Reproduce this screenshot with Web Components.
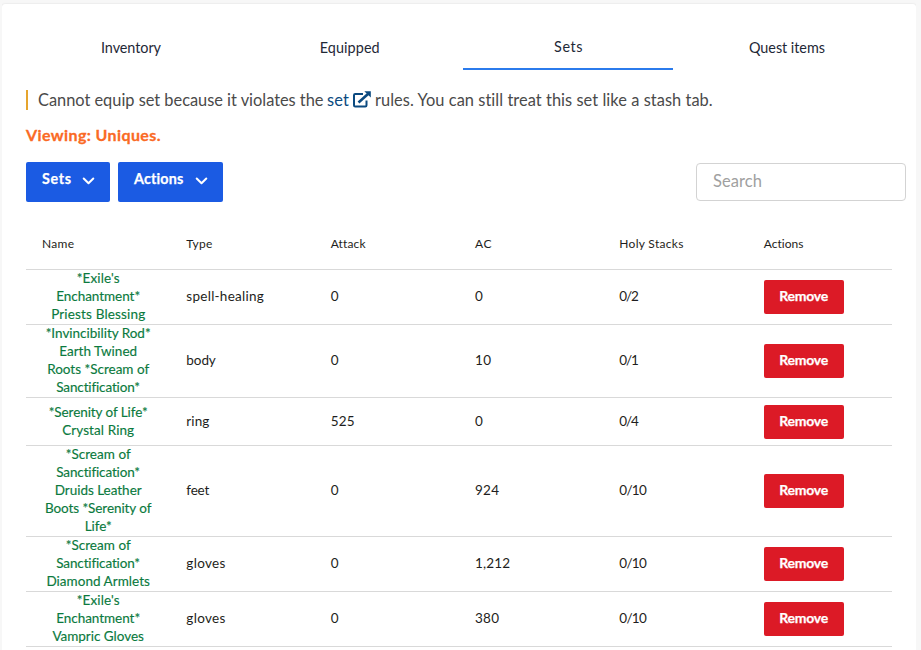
<!DOCTYPE html>
<html lang="en">
<head>
<meta charset="utf-8">
<title>Sets</title>
<style>
html, body { margin: 0; height: 100%; overflow: hidden; background: #f7f7f7; }
body { font-family: Lato, "Open Sans", sans-serif; color: #1e1e20; }
</style>
</head>
<body>
<inventory-page></inventory-page>
<script>
// Text run whose tracking is set so that it fills a given width.
class FitText extends HTMLElement {
  connectedCallback() {
    const root = this.attachShadow({ mode: 'open' });
    root.innerHTML = `<style>:host{display:inline-block;white-space:pre;vertical-align:baseline;transform:translateY(var(--lift,-1px))}span{display:inline-block}</style><span><slot></slot></span>`;
    const span = root.querySelector('span');
    const n = this.textContent.length;
    const want = parseFloat(this.getAttribute('w'));
    if (!want || n < 2) return;
    const ls = (want - span.getBoundingClientRect().width) / (n - 1);
    span.style.letterSpacing = ls + 'px';
    span.style.marginRight = -ls + 'px';
  }
}

class TabItem extends HTMLElement {
  connectedCallback() {
    this.attachShadow({ mode: 'open' }).innerHTML = `<style>
      :host{--lift:0px;display:flex;align-items:center;justify-content:center;width:210px;height:44px;box-sizing:border-box;font-size:14.4px;line-height:18px;color:#1f2937}
      :host([active]){border-bottom:2px solid #2b7bec}
    </style><slot></slot>`;
  }
}

class TabBar extends HTMLElement {
  connectedCallback() {
    this.attachShadow({ mode: 'open' }).innerHTML = `<style>
      :host{display:flex;justify-content:space-between}</style><slot></slot>`;
  }
}

class SetNotice extends HTMLElement {
  connectedCallback() {
    this.attachShadow({ mode: 'open' }).innerHTML = `<style>
      :host{--lift:0px;display:flex;align-items:center;height:20px;margin-top:20px;border-left:2px solid #e6a52e;padding-left:10px;font-size:16.4px;line-height:20px;color:#4a4a4a;white-space:nowrap}
      a{color:#0b4a80;margin-left:3.5px;display:flex;align-items:center}
      svg{margin:-2px 4px 0 4px;display:block}
    </style>
    <fit-text w="285.5">Cannot equip set because it violates the</fit-text>
    <a><fit-text w="22">set</fit-text><svg width="18" height="17" viewBox="0 0 18 17" fill="none" stroke="currentColor">
      <path d="M10 3H2.2Q1 3 1 4.2V14.2Q1 15.4 2.2 15.4H12.3Q13.5 15.4 13.5 14.2V9.5" stroke-width="2"/>
      <path d="M5.5 11.5L15 3" stroke-width="2.6"/><path d="M11.3 .3H17.8V6.6Z" fill="currentColor" stroke="none"/></svg></a>
    <fit-text w="338">rules. You can still treat this set like a stash tab.</fit-text>`;
  }
}

class DropButton extends HTMLElement {
  connectedCallback() {
    this.attachShadow({ mode: 'open' }).innerHTML = `<style>
      :host{display:flex;justify-content:space-between;box-sizing:border-box;height:40px;padding:0 15px 5px 16px;align-items:center;background:#1b5be3;border-radius:2px;color:#fff;font-weight:700;font-size:14.3px;line-height:18px;-webkit-text-stroke:.25px #fff}
      svg{display:block;margin-top:3px}
    </style><slot></slot><svg width="13" height="9" viewBox="0 0 13 9" fill="none" stroke="#fff" stroke-width="2" stroke-linecap="round" stroke-linejoin="round"><path d="M1.7 1.5L6.5 6.3L11.3 1.5"/></svg>`;
  }
}

class SearchBox extends HTMLElement {
  connectedCallback() {
    this.attachShadow({ mode: 'open' }).innerHTML = `<style>
      :host{--lift:0px;display:flex;align-items:center;box-sizing:border-box;width:210px;height:38px;border:1px solid #d3d3d3;border-radius:4px;padding:0 16px 1px;font-size:16.5px;line-height:19px;color:#a0a0a0}
    </style><fit-text w="49">Search</fit-text>`;
  }
}

class RemoveButton extends HTMLElement {
  connectedCallback() {
    this.attachShadow({ mode: 'open' }).innerHTML = `<style>
      :host{display:flex;align-items:center;justify-content:center;width:80px;height:34px;box-sizing:border-box;background:#dc1a26;border-radius:2px;color:#fff;font-weight:700;font-size:14px;line-height:18px;-webkit-text-stroke:.25px #fff}
    </style><fit-text w="49">Remove</fit-text>`;
  }
}

class ItemRow extends HTMLElement {
  connectedCallback() {
    const d = this.data;
    const t = ([s, w]) => `<div class="c"><fit-text w="${w}">${s}</fit-text></div>`;
    this.attachShadow({ mode: 'open' }).innerHTML = `<style>
      :host{display:grid;grid-template-columns:repeat(6,1fr);align-items:center;min-height:48px;box-sizing:border-box;border-bottom:1px solid #d9d9d9;font-size:13.5px;line-height:18px}
      :host([head]){height:56px;font-size:12px;padding-top:6px}
      .c{padding-left:16px;height:18px}
      .c:last-child{height:auto}
      .n{display:flex;flex-direction:column;align-items:center;color:#0b7a3e;-webkit-text-stroke:.15px #0b7a3e}
      .n fit-text{height:18px}
    </style>` + (this.hasAttribute('head')
      ? d.map(t).join('')
      : `<div class="n">${d[0].map(([s, w]) => `<fit-text w="${w}">${s}</fit-text>`).join('')}</div>` +
        d.slice(1).map(t).join('') + `<div class="c"><remove-button></remove-button></div>`);
  }
}

class ItemTable extends HTMLElement {
  connectedCallback() {
    const root = this.attachShadow({ mode: 'open' });
    root.innerHTML = `<style>:host{display:block;margin-top:12px}</style>`;
    const add = (data, head) => {
      const r = document.createElement('item-row');
      r.data = data;
      if (head) r.setAttribute('head', '');
      root.append(r);
    };
    add([['Name', 32], ['Type', 26], ['Attack', 34.5], ['AC', 16.5], ['Holy Stacks', 64], ['Actions', 40]], true);
    const san = ['Sanctification*', 84], ench = ['Enchantment*', 84], exile = ["*Exile's", 43], scream = ['*Scream of', 65];
    [
      [[exile, ench, ['Priests Blessing', 94]], ['spell-healing', 77.5], ['0', 8], ['0', 8], ['0/2', 19.5]],
      [[['*Invincibility Rod*', 105], ['Earth Twined', 78], ['Roots *Scream of', 102], san], ['body', 29.5], ['0', 8], ['10', 16], ['0/1', 19.5]],
      [[['*Serenity of Life*', 99], ['Crystal Ring', 72]], ['ring', 23], ['525', 24], ['0', 8], ['0/4', 19.5]],
      [[scream, san, ['Druids Leather', 87], ['Boots *Serenity of', 106.5], ['Life*', 27]], ['feet', 23], ['0', 8], ['924', 24], ['0/10', 27.5]],
      [[scream, san, ['Diamond Armlets', 103.5]], ['gloves', 39], ['0', 8], ['1,212', 35], ['0/10', 27.5]],
      [[exile, ench, ['Vampric Gloves', 91.5]], ['gloves', 39], ['0', 8], ['380', 24], ['0/10', 27.5]]
    ].forEach(r => add(r));
  }
}

class InventoryPage extends HTMLElement {
  connectedCallback() {
    this.attachShadow({ mode: 'open' }).innerHTML = `<style>
      :host{display:block;box-sizing:border-box;margin:0 5px 0 2px;padding-top:4px;height:650px;overflow:hidden}
      main{box-sizing:border-box;background:#fff;border-radius:3px 3px 0 0;box-shadow:0 0 2px #0002;height:660px;padding:22px 24px 0}
      .view{margin-top:16px;height:20px;line-height:20px;font-size:16px;font-weight:700;color:#fa6a25;-webkit-text-stroke:.3px #fa6a25}
      .bar{display:flex;gap:8px;margin-top:16px;height:40px}
      .sets{width:84px}.acts{width:105px}
      search-box{margin:1px -14px 0 auto}
    </style>
    <main>
      <tab-bar>
        <tab-item><fit-text w="60">Inventory</fit-text></tab-item>
        <tab-item><fit-text w="60">Equipped</fit-text></tab-item>
        <tab-item active><fit-text w="28.5">Sets</fit-text></tab-item>
        <tab-item><fit-text w="76">Quest items</fit-text></tab-item>
      </tab-bar>
      <set-notice></set-notice>
      <div class="view"><fit-text w="134.5">Viewing: Uniques.</fit-text></div>
      <div class="bar">
        <drop-button class="sets"><fit-text w="29">Sets</fit-text></drop-button>
        <drop-button class="acts"><fit-text w="49.5">Actions</fit-text></drop-button>
        <search-box></search-box>
      </div>
      <item-table></item-table>
    </main>`;
  }
}

const parts = { 'tab-item': TabItem, 'tab-bar': TabBar, 'set-notice': SetNotice, 'drop-button': DropButton, 'search-box': SearchBox, 'remove-button': RemoveButton, 'item-row': ItemRow, 'item-table': ItemTable, 'inventory-page': InventoryPage };
for (const [name, cls] of Object.entries(parts)) customElements.define(name, cls);
// Defined last so every run is measured inside its finished parent.
customElements.define('fit-text', FitText);
</script>
</body>
</html>
